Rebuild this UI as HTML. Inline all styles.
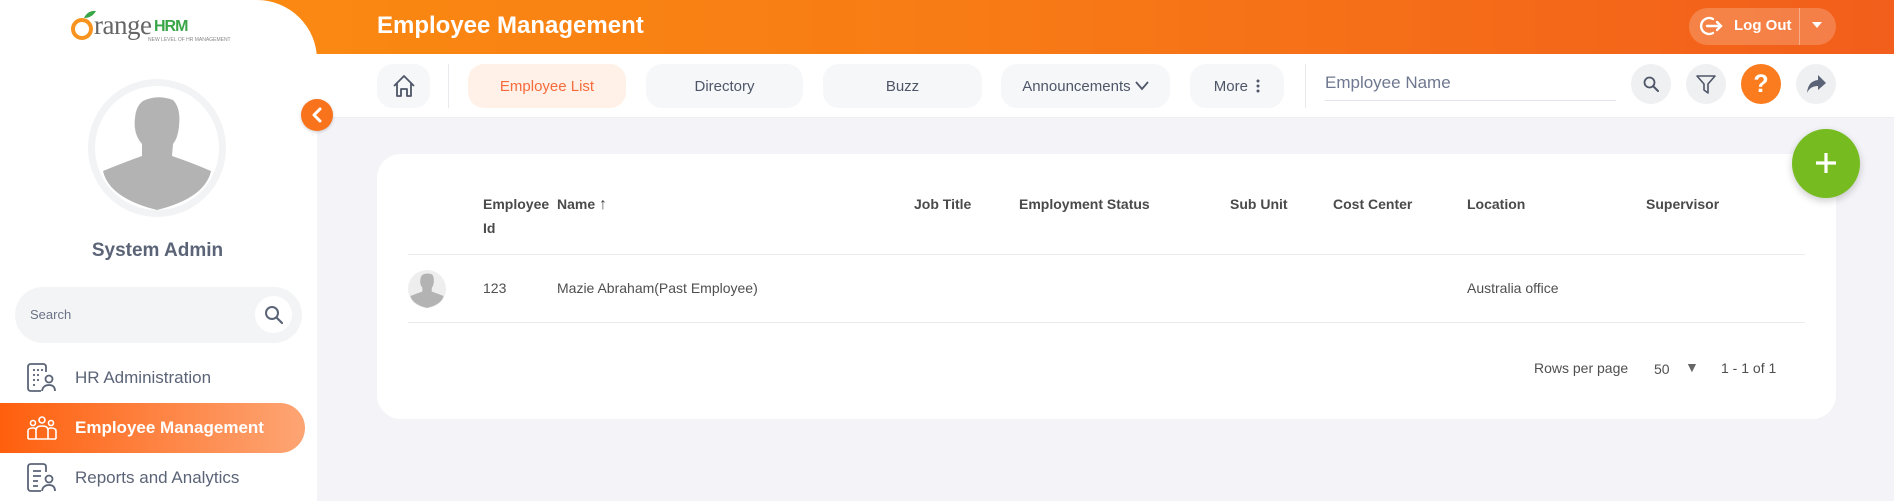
<!DOCTYPE html>
<html><head><meta charset="utf-8"><style>
*{box-sizing:border-box;margin:0;padding:0}
body{width:1894px;height:501px;overflow:hidden;background:#f4f4f8;font-family:"Liberation Sans",sans-serif;position:relative}
.abs{position:absolute}
.hdr{left:0;top:0;width:1894px;height:54px;background:linear-gradient(90deg,#fb8e10 0%,#f87c15 50%,#f25e1b 100%)}
.side{left:0;top:0;width:317px;height:501px;background:#fff;border-top-right-radius:60px}
.tb{left:317px;top:54px;width:1577px;height:64px;background:#fff;border-bottom:1px solid #eceef2}
.pill{top:64px;height:44px;border-radius:16px;background:#f6f7f9;color:#4e5668;font-size:15px;display:flex;align-items:center;justify-content:center}
.rb{top:64px;width:40px;height:40px;border-radius:50%;background:#eff0f2;display:flex;align-items:center;justify-content:center}
.th{font-size:14px;font-weight:bold;color:#4a4a4a;top:192px}
.td{font-size:14px;color:#4f4f4f;top:280px}
.menu{font-size:17px;color:#5b6477;left:75px}
</style></head><body>
<div class="abs hdr"></div>
<div class="abs tb"></div>
<div class="abs side"></div>

<!-- logo -->
<svg class="abs" style="left:70px;top:8px" width="30" height="34" viewBox="0 0 30 34"><circle cx="12" cy="21" r="9" fill="none" stroke="#f7931e" stroke-width="4"/><path d="M14 10 Q18 2 26 3 Q22 10 14 10Z" fill="#3aa648"/></svg>
<div class="abs" style="left:94px;top:10px;font-family:'Liberation Serif',serif;font-size:27px;color:#666;letter-spacing:-0.5px">range</div>
<div class="abs" style="left:154px;top:18px;font-size:16px;font-weight:bold;color:#3aa648;letter-spacing:-1px">HRM</div>
<div class="abs" style="left:148px;top:37px;font-size:5px;color:#888;white-space:nowrap">NEW LEVEL OF HR MANAGEMENT</div>

<!-- avatar -->
<div class="abs" style="left:88px;top:79px;width:138px;height:138px;border-radius:50%;background:#f2f3f5"></div>
<div class="abs" style="left:95px;top:86px;width:124px;height:124px;border-radius:50%;background:#fff;overflow:hidden">
<svg width="124" height="124" viewBox="0 0 124 124"><path d="M48 15 Q62 8 78 14 Q86 22 84 40 Q83 52 78 58 L77 70 Q95 76 116 85 Q110 112 62 124 Q14 112 8 85 Q30 76 47 70 L47 58 Q38 48 40 32 Q41 20 48 15Z" fill="#b3b3b3"/></svg></div>
<div class="abs" style="left:0;width:315px;top:240px;text-align:center;font-size:19px;font-weight:bold;color:#5b6477">System Admin</div>

<!-- search -->
<div class="abs" style="left:15px;top:287px;width:287px;height:56px;border-radius:28px;background:#f3f4f6"></div>
<div class="abs" style="left:30px;top:307px;font-size:13px;color:#6a7286">Search</div>
<div class="abs" style="left:255px;top:296px;width:37px;height:37px;border-radius:50%;background:#fff"></div>
<svg class="abs" style="left:264px;top:305px" width="20" height="20" viewBox="0 0 20 20"><circle cx="8" cy="8" r="6" fill="none" stroke="#5b6477" stroke-width="2"/><path d="M12.5 12.5 L18 18" stroke="#5b6477" stroke-width="2.2" stroke-linecap="round"/></svg>

<!-- menu -->
<svg class="abs" style="left:27px;top:363px" width="30" height="30" viewBox="0 0 30 30" fill="none" stroke="#5b6477" stroke-width="1.8"><path d="M14 28 H4 Q1 28 1 25 V4 Q1 1 4 1 H16 Q19 1 19 4 V9"/><g fill="#5b6477" stroke="none"><circle cx="7" cy="7" r="1.1"/><circle cx="11" cy="7" r="1.1"/><circle cx="15" cy="7" r="1.1"/><circle cx="7" cy="12" r="1.1"/><circle cx="11" cy="12" r="1.1"/><circle cx="7" cy="17" r="1.1"/><circle cx="11" cy="17" r="1.1"/><circle cx="7" cy="22" r="1.1"/></g><circle cx="22" cy="16" r="3.5"/><path d="M15 28 Q16 22 22 22 Q28 22 28 28"/></svg>
<div class="abs menu" style="top:368px">HR Administration</div>
<div class="abs" style="left:0;top:403px;width:305px;height:50px;border-radius:0 25px 25px 0;background:linear-gradient(90deg,#fe5f0d,#fda574)"></div>
<svg class="abs" style="left:27px;top:416px" width="30" height="24" viewBox="0 0 30 24" fill="none" stroke="#fff" stroke-width="1.6"><circle cx="15" cy="4" r="3"/><circle cx="6" cy="7" r="2.5"/><circle cx="24" cy="7" r="2.5"/><path d="M9 23 V14 Q9 10 15 10 Q21 10 21 14 V23"/><path d="M1 23 V15 Q1 12 6 12 Q9 12 9 14"/><path d="M29 23 V15 Q29 12 24 12 Q21 12 21 14"/><path d="M1 23 H29"/></svg>
<div class="abs menu" style="top:418px;color:#fff;font-weight:bold">Employee Management</div>
<svg class="abs" style="left:27px;top:463px" width="30" height="30" viewBox="0 0 30 30" fill="none" stroke="#5b6477" stroke-width="1.8"><path d="M14 28 H4 Q1 28 1 25 V4 Q1 1 4 1 H16 Q19 1 19 4 V9"/><path d="M6 8 H14 M6 13 H14 M6 18 H11 M6 23 H11"/><circle cx="22" cy="16" r="3.5"/><path d="M15 28 Q16 22 22 22 Q28 22 28 28"/></svg>
<div class="abs menu" style="top:468px">Reports and Analytics</div>

<!-- collapse -->
<div class="abs" style="left:301px;top:99px;width:32px;height:32px;border-radius:50%;background:#f9731d;box-shadow:0 1px 3px rgba(0,0,0,.2)"></div>
<svg class="abs" style="left:310px;top:107px" width="14" height="16" viewBox="0 0 14 16"><path d="M10 2 L4 8 L10 14" fill="none" stroke="#fff" stroke-width="3" stroke-linecap="round" stroke-linejoin="round"/></svg>

<!-- header -->
<div class="abs" style="left:377px;top:12px;font-size:24px;font-weight:bold;color:#fff">Employee Management</div>
<div class="abs" style="left:1689px;top:8px;width:147px;height:37px;border-radius:19px;background:rgba(255,255,255,.2)"></div>
<div class="abs" style="left:1799px;top:8px;width:1px;height:37px;background:rgba(255,255,255,.35)"></div>
<svg class="abs" style="left:1698px;top:14px" width="26" height="24" viewBox="0 0 26 24" fill="none" stroke="#fff" stroke-width="2.4" stroke-linecap="round"><path d="M15 5 A8 8 0 1 0 15 19"/><path d="M9 12 H23 M19 8 L23 12 L19 16"/></svg>
<div class="abs" style="left:1734px;top:17px;font-size:15px;font-weight:bold;color:#fff">Log Out</div>
<svg class="abs" style="left:1811px;top:21px" width="12" height="8" viewBox="0 0 12 8"><path d="M1 1 H11 L6 7Z" fill="#fff"/></svg>

<!-- toolbar -->
<div class="abs pill" style="left:377px;width:53px"><svg width="24" height="24" viewBox="0 0 24 24" fill="none" stroke="#4e5668" stroke-width="1.8" stroke-linejoin="round"><path d="M2 12 L12 2 L22 12 M5 9 V22 H9 V15 H15 V22 H19 V9"/></svg></div>
<div class="abs" style="left:448px;top:64px;width:1px;height:44px;background:#e8e9ec"></div>
<div class="abs pill" style="left:468px;width:158px;background:#fff1e8;color:#f56b3b">Employee List</div>
<div class="abs pill" style="left:646px;width:157px">Directory</div>
<div class="abs pill" style="left:823px;width:159px">Buzz</div>
<div class="abs pill" style="left:1001px;width:169px">Announcements&nbsp;<svg width="14" height="10" viewBox="0 0 14 10"><path d="M1 1 L7 8 L13 1" fill="none" stroke="#4e5668" stroke-width="1.8"/></svg></div>
<div class="abs pill" style="left:1190px;width:94px">More&nbsp;&nbsp;<svg width="4" height="14" viewBox="0 0 4 14" fill="#4e5668"><circle cx="2" cy="2" r="1.5"/><circle cx="2" cy="7" r="1.5"/><circle cx="2" cy="12" r="1.5"/></svg></div>
<div class="abs" style="left:1305px;top:64px;width:1px;height:44px;background:#e8e9ec"></div>
<div class="abs" style="left:1325px;top:73px;font-size:17px;color:#6f7890">Employee Name</div>
<div class="abs" style="left:1325px;top:100px;width:291px;height:1px;background:#e3e5ea"></div>
<div class="abs rb" style="left:1631px"><svg width="18" height="18" viewBox="0 0 18 18"><circle cx="7.5" cy="7.5" r="5" fill="none" stroke="#4e5668" stroke-width="1.8"/><path d="M11 11 L16 16" stroke="#4e5668" stroke-width="2" stroke-linecap="round"/></svg></div>
<div class="abs rb" style="left:1686px"><svg width="22" height="22" viewBox="0 0 22 22"><path d="M2 3 H20 L13 11 V20 L9 17 V11Z" fill="none" stroke="#4e5668" stroke-width="1.6" stroke-linejoin="round"/></svg></div>
<div class="abs rb" style="left:1741px;background:#fb7b1f;color:#fff;font-size:25px;font-weight:bold">?</div>
<div class="abs rb" style="left:1796px"><svg width="22" height="20" viewBox="0 0 22 20"><path d="M13 1 L21 9 L13 16 V12 Q5 12 2 19 Q3 7 13 6Z" fill="#5b6477"/></svg></div>

<!-- card -->
<div class="abs" style="left:377px;top:154px;width:1459px;height:265px;background:#fff;border-radius:24px"></div>
<div class="abs th" style="left:483px;line-height:24px">Employee<br>Id</div>
<div class="abs th" style="left:557px;line-height:24px">Name <span style="font-weight:normal;font-size:16px">↑</span></div>
<div class="abs th" style="left:914px;line-height:24px">Job Title</div>
<div class="abs th" style="left:1019px;line-height:24px">Employment Status</div>
<div class="abs th" style="left:1230px;line-height:24px">Sub Unit</div>
<div class="abs th" style="left:1333px;line-height:24px">Cost Center</div>
<div class="abs th" style="left:1467px;line-height:24px">Location</div>
<div class="abs th" style="left:1646px;line-height:24px">Supervisor</div>
<div class="abs" style="left:408px;top:254px;width:1397px;height:1px;background:#ececec"></div>
<div class="abs" style="left:408px;top:322px;width:1397px;height:1px;background:#ececec"></div>
<div class="abs" style="left:408px;top:270px;width:38px;height:38px;border-radius:50%;background:#eee;overflow:hidden"><svg width="38" height="38" viewBox="0 0 124 124"><path d="M48 15 Q62 8 78 14 Q86 22 84 40 Q83 52 78 58 L77 70 Q95 76 116 85 Q110 112 62 124 Q14 112 8 85 Q30 76 47 70 L47 58 Q38 48 40 32 Q41 20 48 15Z" fill="#b3b3b3"/></svg></div>
<div class="abs td" style="left:483px">123</div>
<div class="abs td" style="left:557px">Mazie Abraham(Past Employee)</div>
<div class="abs td" style="left:1467px">Australia office</div>
<div class="abs td" style="left:1534px;top:360px">Rows per page</div>
<div class="abs td" style="left:1654px;top:361px">50</div>
<div class="abs td" style="left:1685px;top:359px;color:#666">▼</div>
<div class="abs td" style="left:1721px;top:360px">1 - 1 of 1</div>

<!-- FAB -->
<div class="abs" style="left:1792px;top:129px;width:68px;height:69px;border-radius:50%;background:#76bc21;box-shadow:0 3px 8px rgba(0,0,0,.2)"></div>
<svg class="abs" style="left:1814px;top:151px" width="24" height="24" viewBox="0 0 24 24"><path d="M12 2 V22 M2 12 H22" stroke="#fff" stroke-width="3.2"/></svg>
</body></html>
